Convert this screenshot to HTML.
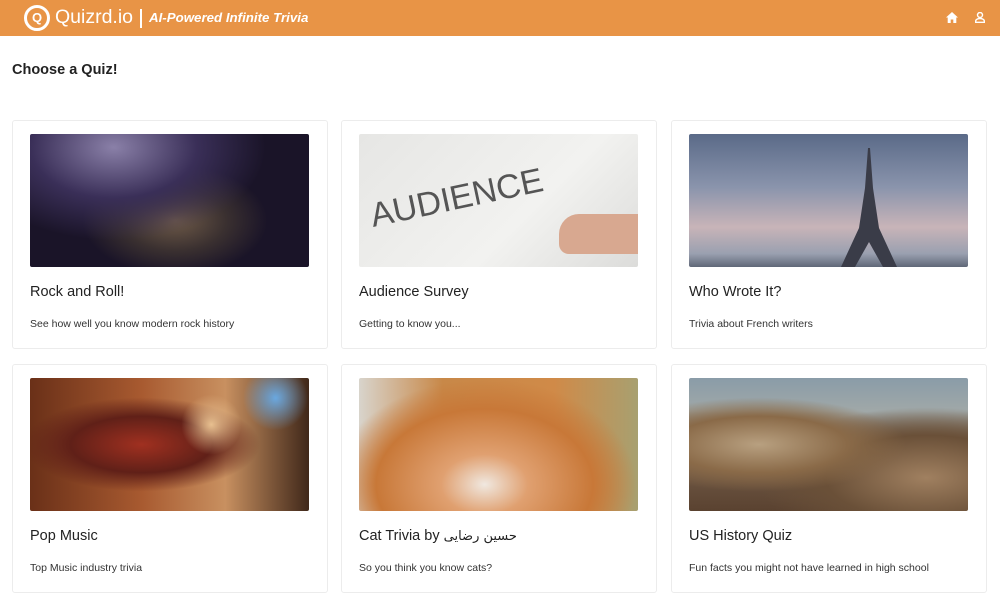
<!DOCTYPE html>
<html><head><meta charset="utf-8"><style>
*{box-sizing:border-box;margin:0;padding:0}
body{width:1000px;height:604px;background:#fff;font-family:"Liberation Sans",sans-serif;overflow:hidden;position:relative}
.hdr{position:absolute;left:0;top:0;width:1000px;height:36px;background:#e89446;color:#fff}
.logo{position:absolute;left:24px;top:5px;width:26px;height:26px;border:3px solid #fff;border-radius:50%;font-size:13px;font-weight:bold;text-align:center;line-height:20px}
.brand{position:absolute;left:55px;top:6px;font-size:19.5px}
.tag{position:absolute;left:149px;top:10px;font-size:13.3px;font-weight:bold;font-style:italic}
.h1{position:absolute;left:12px;top:62px;font-size:14.5px;font-weight:bold;color:#222}
.card{position:absolute;width:316px;height:229px;border:1px solid #ececec;border-radius:3px;background:#fff}
.img{position:absolute;left:17px;top:13px;width:279px;height:133px;border-radius:2px}
.t{position:absolute;left:17px;top:163px;font-size:14.5px;color:#222}
.d{position:absolute;left:17px;top:197px;font-size:10.5px;color:#333}
</style></head><body>
<div class="hdr">
<div class="logo">Q</div>
<div class="brand">Quizrd.io</div>
<div style="position:absolute;left:140px;top:9px;width:1.5px;height:19px;background:#fff"></div>
<div class="tag">AI-Powered Infinite Trivia</div>
<svg style="position:absolute;left:946px;top:12px" width="12" height="11" viewBox="0 0 12 11"><path d="M6 0L0 5.5h1.7V11h3V7.5h2.6V11h3V5.5H12z" fill="#fff"/></svg>
<svg style="position:absolute;left:975px;top:12px" width="10" height="11" viewBox="0 0 10 11"><circle cx="5" cy="3" r="2.5" fill="none" stroke="#fff" stroke-width="1.4"/><path d="M0.7 10.3v-1.3c0-1.7 2.5-2.5 4.3-2.5s4.3.8 4.3 2.5v1.3z" fill="none" stroke="#fff" stroke-width="1.4"/></svg>
</div>
<div class="h1">Choose a Quiz!</div>

<div class="card" style="left:12px;top:120px"><div class="img" style="background:radial-gradient(ellipse at 30% 10%,#8a80a8 0%,#3a2f58 30%,transparent 55%),radial-gradient(ellipse at 52% 65%,#6e5a48 0%,#3a3030 25%,transparent 45%),#1a1428"></div><div class="t">Rock and Roll!</div><div class="d">See how well you know modern rock history</div></div>
<div class="card" style="left:341px;top:120px"><div class="img" style="background:linear-gradient(135deg,#e6e6e4,#f2f2f0 60%,#dcdcda)"><span style="position:absolute;left:10px;top:45px;font-size:34px;color:#555;transform:rotate(-12deg);font-family:'Liberation Sans'">AUDIENCE</span><div style="position:absolute;left:200px;top:80px;width:79px;height:40px;background:#d8a890;border-radius:20px 0 0 10px"></div></div><div class="t">Audience Survey</div><div class="d">Getting to know you...</div></div>
<div class="card" style="left:671px;top:120px"><div class="img" style="background:linear-gradient(180deg,#5a6a88 0%,#8a94ac 40%,#c8b4b8 70%,#9aa0b0 90%,#606878 100%)"><svg style="position:absolute;left:150px;top:14px" width="60" height="119" viewBox="0 0 60 119"><path d="M29 0h2l3 40 6 40 18 39H44l-14-25-14 25H2l18-39 6-40z" fill="#3a3c48"/></svg></div><div class="t">Who Wrote It?</div><div class="d">Trivia about French writers</div></div>

<div class="card" style="left:12px;top:364px"><div class="img" style="background:radial-gradient(circle at 88% 15%,#6aa8e0 0,transparent 12%),radial-gradient(circle at 65% 35%,#e8c090 0,transparent 15%),radial-gradient(ellipse at 40% 50%,#a03020 0,#602018 30%,transparent 50%),linear-gradient(90deg,#6a3018,#a85a30 40%,#c89060 70%,#40281a)"></div><div class="t">Pop Music</div><div class="d">Top Music industry trivia</div></div>
<div class="card" style="left:341px;top:364px"><div class="img" style="background:radial-gradient(ellipse at 45% 80%,#f0e8e0 0,#e0a070 20%,#c87838 50%,transparent 70%),linear-gradient(90deg,#d8d4cc,#c88848 30%,#d08a48 70%,#a8a070)"></div><div class="t">Cat Trivia by <span style="font-family:'DejaVu Sans',sans-serif;font-size:13px">حسین رضایی</span></div><div class="d">So you think you know cats?</div></div>
<div class="card" style="left:671px;top:364px"><div class="img" style="background:radial-gradient(ellipse at 25% 50%,#b8a080 0,#8a6a48 30%,transparent 50%),radial-gradient(ellipse at 85% 75%,#a08060 0,#6a5038 30%,transparent 50%),linear-gradient(180deg,#8a9ca8 0%,#a0a8a8 25%,#7a6450 50%,#5a4230 100%)"></div><div class="t">US History Quiz</div><div class="d">Fun facts you might not have learned in high school</div></div>
</body></html>
